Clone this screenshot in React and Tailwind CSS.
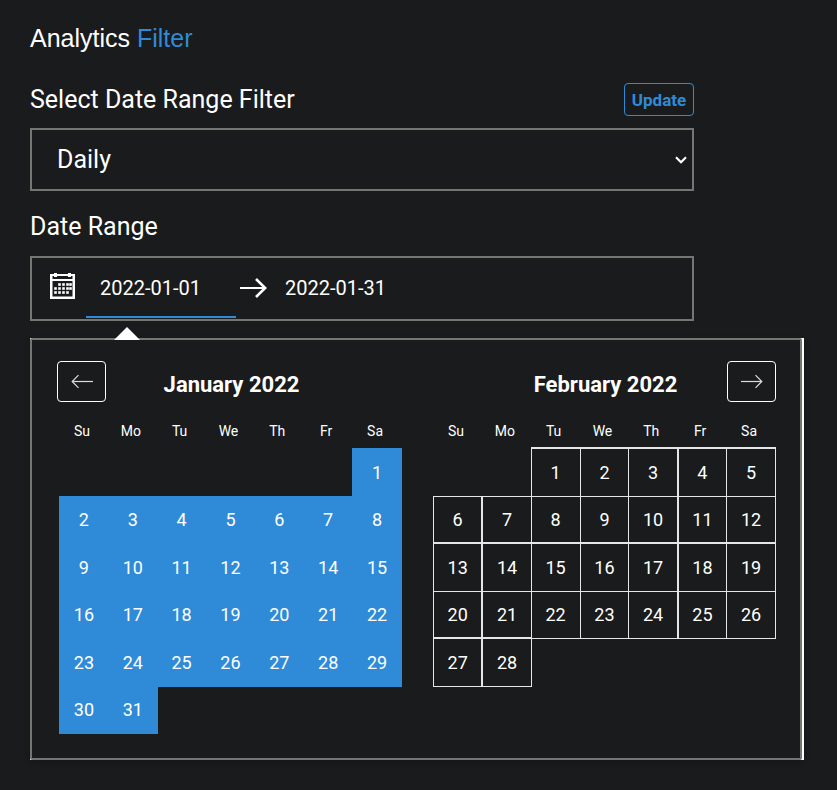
import React from "react";

const WEEKDAYS = ["Su", "Mo", "Tu", "We", "Th", "Fr", "Sa"];

function buildWeeks(offset, count) {
  const cells = Array(offset).fill(null);
  for (let d = 1; d <= count; d++) cells.push(d);
  while (cells.length % 7) cells.push(null);
  const weeks = [];
  for (let i = 0; i < cells.length; i += 7) weeks.push(cells.slice(i, i + 7));
  return weeks;
}

function CalendarIcon() {
  const dots = [
    [9, 11], [13, 11], [17, 11], [20, 11],
    [5, 15], [9, 15], [13, 15], [17, 15], [20, 15],
    [5, 19], [9, 19], [13, 19], [17, 19],
  ];
  return (
    <svg width="25" height="31" viewBox="0 0 25 31" fill="currentColor" aria-hidden="true">
      <path
        fillRule="evenodd"
        d="M0 1h4V0h3v1h11V0h3v1h4v25H0zM2.5 3v3h20V3H21v1h-3V3H7v1H4V3zM2.5 8v15.5h20V8z"
      />
      {dots.map(([x, y]) => (
        <rect key={`${x}-${y}`} x={x - 0.8} y={y - 0.8} width="2.6" height="2.6" />
      ))}
    </svg>
  );
}

function RangeArrow() {
  return (
    <svg width="27" height="22" viewBox="0 0 27 22" fill="none" stroke="currentColor" aria-hidden="true">
      <path d="M0 10H26" strokeWidth="2" />
      <path d="M16 1L25.2 10L16 19" strokeWidth="2.6" />
    </svg>
  );
}

function NavArrow({ flip }) {
  return (
    <svg
      width="22"
      height="15"
      viewBox="0 0 22 15"
      fill="none"
      stroke="#dcdcdc"
      className={flip ? "-scale-x-100" : ""}
      aria-hidden="true"
    >
      <path d="M0 7.5H21" strokeWidth="1.2" />
      <path d="M14.5 1.2L20.8 7.5L14.5 13.8" strokeWidth="1.2" />
    </svg>
  );
}

function NavButton({ label, flip }) {
  return (
    <button
      type="button"
      aria-label={label}
      className="flex h-[41px] w-[49px] items-center justify-center rounded-[4px] border border-white"
    >
      <NavArrow flip={flip} />
    </button>
  );
}

function Month({ title, offset, count, selected, prev, next }) {
  const filled = "border border-[#2f8bd8] bg-[#2f8bd8] p-0 pt-px";
  const outlined =
    "border border-[#e4e7e7] p-0 pt-px nth-2:border-l-2 nth-6:border-l-2 in-[tr:nth-child(odd)]:border-t-2";
  return (
    <section className="w-[345px]">
      <div className="grid h-[55px] grid-cols-[49px_1fr_49px] items-start">
        <div>{prev}</div>
        <h2 className="pl-1 text-center text-[22px] leading-[48px] font-bold">{title}</h2>
        <div>{next}</div>
      </div>
      <table className="ml-auto w-[343px] table-fixed border-collapse text-center">
        <thead>
          <tr className="h-8">
            {WEEKDAYS.map((d) => (
              <th key={d} scope="col" className="p-0 pr-1 pb-0.5 text-[14px] leading-[20px] font-normal">
                {d}
              </th>
            ))}
          </tr>
        </thead>
        <tbody>
          {buildWeeks(offset, count).map((week, i) => (
            <tr key={i} className="odd:h-[48px] even:h-[47px]">
              {week.map((day, j) => (
                <td key={j} className={day ? (selected ? filled : outlined) : "p-0"}>
                  {day && (
                    <button type="button" className="block w-full text-[18px] leading-[24px]">
                      {day}
                    </button>
                  )}
                </td>
              ))}
            </tr>
          ))}
        </tbody>
      </table>
    </section>
  );
}

export default function App() {
  return (
    <div className="min-h-screen bg-[#1a1b1c] px-[30px] pt-[22px] pb-[29px] font-['Roboto',sans-serif] text-white">
      <main className="max-w-[664px]">
        <h1 className="font-['Liberation_Sans',sans-serif] text-[25px] leading-[33px]">
          Analytics <span className="text-[#2f8bd8]">Filter</span>
        </h1>

        <div className="mt-7 flex items-center justify-between">
          <label htmlFor="granularity" className="text-[25px] leading-[32px]">
            Select Date Range Filter
          </label>
          <button
            type="button"
            className="h-[33px] w-[70px] rounded-[4px] border border-[#2f8bd8] text-[17px] leading-[24px] font-bold text-[#2f8bd8]"
          >
            Update
          </button>
        </div>

        <div className="mt-3 grid items-center">
          <select
            id="granularity"
            defaultValue="Daily"
            className="col-start-1 row-start-1 h-[63px] w-full appearance-none border-2 border-[#757571] bg-[#1a1b1c] pl-[25px] text-[25px]"
          >
            <option>Daily</option>
            <option>Weekly</option>
            <option>Monthly</option>
          </select>
          <svg
            width="12"
            height="8"
            viewBox="0 0 12 8"
            fill="none"
            stroke="#fff"
            strokeWidth="2.2"
            className="pointer-events-none col-start-1 row-start-1 mr-[7px] justify-self-end"
            aria-hidden="true"
          >
            <path d="M1 1.3L6 6.3L11 1.3" />
          </svg>
        </div>

        <label htmlFor="start-date" className="mt-5 block text-[25px] leading-[32px]">
          Date Range
        </label>

        <div className="mt-[13px] flex h-[65px] items-center border-2 border-[#757571] pl-[18px]">
          <CalendarIcon />
          <input
            id="start-date"
            type="text"
            defaultValue="2022-01-01"
            className="ml-[11px] h-[59px] w-[150px] border-b-2 border-[#2f8bd8] px-[14px] text-[20px] outline-none"
          />
          <span className="px-1">
            <RangeArrow />
          </span>
          <input
            type="text"
            aria-label="End date"
            defaultValue="2022-01-31"
            className="h-[59px] w-[150px] border-b-2 border-transparent px-[14px] text-[20px] outline-none"
          />
        </div>

        <div className="relative mt-[17px] w-max bg-white pr-[2px] shadow-[0_2px_6px_rgba(0,0,0,0.2)]">
          <svg
            width="26"
            height="13"
            viewBox="0 0 26 13"
            className="absolute -top-[11px] left-[84px]"
            aria-hidden="true"
          >
            <path d="M0 13L13 0L26 13Z" fill="#fff" />
          </svg>
          <div className="flex gap-[29px] rounded-[2px] border-2 border-[#757571] bg-[#1a1b1c] pt-[21px] pr-6 pb-6 pl-[25px]">
            <Month
              title="January 2022"
              offset={6}
              count={31}
              selected
              prev={<NavButton label="Previous month" flip />}
            />
            <Month
              title="February 2022"
              offset={2}
              count={28}
              next={<NavButton label="Next month" />}
            />
          </div>
        </div>
      </main>
    </div>
  );
}
